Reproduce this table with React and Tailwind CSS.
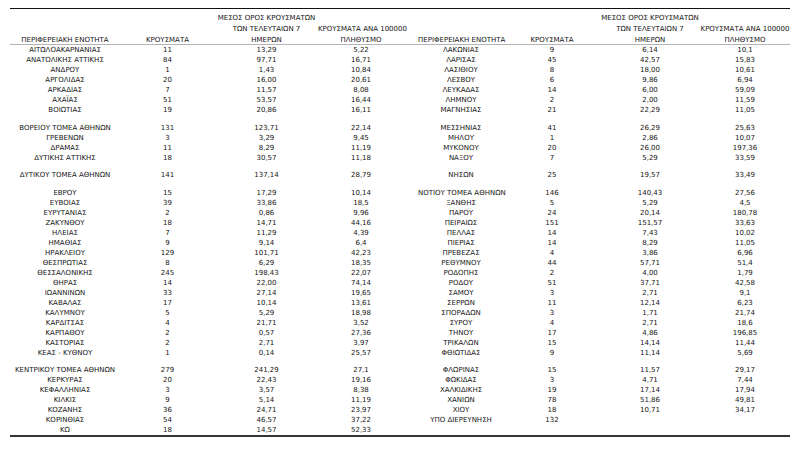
import React from 'react';

// one entry per line: left region, right region; number = spacer height
const rows = [
  [['ΑΙΤΩΛΟΑΚΑΡΝΑΝΙΑΣ', '11', '13,29', '5,22'], ['ΛΑΚΩΝΙΑΣ', '9', '6,14', '10,1']],
  [['ΑΝΑΤΟΛΙΚΗΣ ΑΤΤΙΚΗΣ', '84', '97,71', '16,71'], ['ΛΑΡΙΣΑΣ', '45', '42,57', '15,83']],
  [['ΑΝΔΡΟΥ', '1', '1,43', '10,84'], ['ΛΑΣΙΘΙΟΥ', '8', '18,00', '10,61']],
  [['ΑΡΓΟΛΙΔΑΣ', '20', '16,00', '20,61'], ['ΛΕΣΒΟΥ', '6', '9,86', '6,94']],
  [['ΑΡΚΑΔΙΑΣ', '7', '11,57', '8,08'], ['ΛΕΥΚΑΔΑΣ', '14', '6,00', '59,09']],
  [['ΑΧΑΪΑΣ', '51', '53,57', '16,44'], ['ΛΗΜΝΟΥ', '2', '2,00', '11,59']],
  [['ΒΟΙΩΤΙΑΣ', '19', '20,86', '16,11'], ['ΜΑΓΝΗΣΙΑΣ', '21', '22,29', '11,05']],
  8,
  [['ΒΟΡΕΙΟΥ ΤΟΜΕΑ ΑΘΗΝΩΝ', '131', '123,71', '22,14'], ['ΜΕΣΣΗΝΙΑΣ', '41', '26,29', '25,63']],
  [['ΓΡΕΒΕΝΩΝ', '3', '3,29', '9,45'], ['ΜΗΛΟΥ', '1', '2,86', '10,07']],
  [['ΔΡΑΜΑΣ', '11', '8,29', '11,19'], ['ΜΥΚΟΝΟΥ', '20', '26,00', '197,36']],
  [['ΔΥΤΙΚΗΣ ΑΤΤΙΚΗΣ', '18', '30,57', '11,18'], ['ΝΑΞΟΥ', '7', '5,29', '33,59']],
  7,
  [['ΔΥΤΙΚΟΥ ΤΟΜΕΑ ΑΘΗΝΩΝ', '141', '137,14', '28,79'], ['ΝΗΣΩΝ', '25', '19,57', '33,49']],
  8,
  [['ΕΒΡΟΥ', '15', '17,29', '10,14'], ['ΝΟΤΙΟΥ ΤΟΜΕΑ ΑΘΗΝΩΝ', '146', '140,43', '27,56']],
  [['ΕΥΒΟΙΑΣ', '39', '33,86', '18,5'], ['ΞΑΝΘΗΣ', '5', '5,29', '4,5']],
  [['ΕΥΡΥΤΑΝΙΑΣ', '2', '0,86', '9,96'], ['ΠΑΡΟΥ', '24', '20,14', '180,78']],
  [['ΖΑΚΥΝΘΟΥ', '18', '14,71', '44,16'], ['ΠΕΙΡΑΙΩΣ', '151', '151,57', '33,63']],
  [['ΗΛΕΙΑΣ', '7', '11,29', '4,39'], ['ΠΕΛΛΑΣ', '14', '7,43', '10,02']],
  [['ΗΜΑΘΙΑΣ', '9', '9,14', '6,4'], ['ΠΙΕΡΙΑΣ', '14', '8,29', '11,05']],
  [['ΗΡΑΚΛΕΙΟΥ', '129', '101,71', '42,23'], ['ΠΡΕΒΕΖΑΣ', '4', '3,86', '6,96']],
  [['ΘΕΣΠΡΩΤΙΑΣ', '8', '6,29', '18,35'], ['ΡΕΘΥΜΝΟΥ', '44', '57,71', '51,4']],
  [['ΘΕΣΣΑΛΟΝΙΚΗΣ', '245', '198,43', '22,07'], ['ΡΟΔΟΠΗΣ', '2', '4,00', '1,79']],
  [['ΘΗΡΑΣ', '14', '22,00', '74,14'], ['ΡΟΔΟΥ', '51', '37,71', '42,58']],
  [['ΙΩΑΝΝΙΝΩΝ', '33', '27,14', '19,65'], ['ΣΑΜΟΥ', '3', '2,71', '9,1']],
  [['ΚΑΒΑΛΑΣ', '17', '10,14', '13,61'], ['ΣΕΡΡΩΝ', '11', '12,14', '6,23']],
  [['ΚΑΛΥΜΝΟΥ', '5', '5,29', '18,98'], ['ΣΠΟΡΑΔΩΝ', '3', '1,71', '21,74']],
  [['ΚΑΡΔΙΤΣΑΣ', '4', '21,71', '3,52'], ['ΣΥΡΟΥ', '4', '2,71', '18,6']],
  [['ΚΑΡΠΑΘΟΥ', '2', '0,57', '27,36'], ['ΤΗΝΟΥ', '17', '4,86', '196,85']],
  [['ΚΑΣΤΟΡΙΑΣ', '2', '2,71', '3,97'], ['ΤΡΙΚΑΛΩΝ', '15', '14,14', '11,44']],
  [['ΚΕΑΣ - ΚΥΘΝΟΥ', '1', '0,14', '25,57'], ['ΦΘΙΩΤΙΔΑΣ', '9', '11,14', '5,69']],
  7,
  [['ΚΕΝΤΡΙΚΟΥ ΤΟΜΕΑ ΑΘΗΝΩΝ', '279', '241,29', '27,1'], ['ΦΛΩΡΙΝΑΣ', '15', '11,57', '29,17']],
  [['ΚΕΡΚΥΡΑΣ', '20', '22,43', '19,16'], ['ΦΩΚΙΔΑΣ', '3', '4,71', '7,44']],
  [['ΚΕΦΑΛΛΗΝΙΑΣ', '3', '3,57', '8,38'], ['ΧΑΛΚΙΔΙΚΗΣ', '19', '17,14', '17,94']],
  [['ΚΙΛΚΙΣ', '9', '5,14', '11,19'], ['ΧΑΝΙΩΝ', '78', '51,86', '49,81']],
  [['ΚΟΖΑΝΗΣ', '36', '24,71', '23,97'], ['ΧΙΟΥ', '18', '10,71', '34,17']],
  [['ΚΟΡΙΝΘΙΑΣ', '54', '46,57', '37,22'], ['ΥΠΟ ΔΙΕΡΕΥΝΗΣΗ', '132', '', '']],
  [['ΚΩ', '18', '14,57', '52,33'], ['', '', '', '']],
];

const th = 'p-0 font-normal text-center align-bottom whitespace-nowrap leading-[11px] border-b border-[#b5b5b5]';
const td = 'p-0 h-[10px] text-center whitespace-nowrap leading-[10px]';

function HeaderCells() {
  return (
    <>
      <th className={th}>
        <div className="relative top-[2px]">ΠΕΡΙΦΕΡΕΙΑΚΗ ΕΝΟΤΗΤΑ</div>
      </th>
      <th className={th}>
        <div className="relative top-[2px]">ΚΡΟΥΣΜΑΤΑ</div>
      </th>
      <th className={th}>
        <div className="relative top-[2px]">
          ΜΕΣΟΣ ΟΡΟΣ ΚΡΟΥΣΜΑΤΩΝ
          <br />
          ΤΩΝ ΤΕΛΕΥΤΑΙΩΝ 7
          <br />
          ΗΜΕΡΩΝ
        </div>
      </th>
      <th className={th}>
        <div className="relative top-[2px]">
          ΚΡΟΥΣΜΑΤΑ ΑΝΑ 100000
          <br />
          ΠΛΗΘΥΣΜΟ
        </div>
      </th>
    </>
  );
}

export default function App() {
  return (
    <div className="w-[804px] h-[458px] bg-white pt-[8px] pl-[10px] font-['DejaVu_Sans',sans-serif] text-[7px] text-[#141414]">
      <table className="table-fixed border-collapse w-[780px] border-t border-b-2 border-t-[#111] border-b-[#333]">
        <colgroup>
          <col className="w-[110px]" />
          <col className="w-[95px]" />
          <col className="w-[103px]" />
          <col className="w-[86px]" />
          <col className="w-[14px]" />
          <col className="w-[86px]" />
          <col className="w-[96px]" />
          <col className="w-[100px]" />
          <col className="w-[90px]" />
        </colgroup>
        <thead>
          <tr className="h-[36px]">
            <HeaderCells />
            <th className="p-0 border-b border-[#b5b5b5]" />
            <HeaderCells />
          </tr>
        </thead>
        <tbody>
          {rows.map((r, i) =>
            typeof r === 'number' ? (
              <tr key={i} className={r === 8 ? 'h-[8px]' : 'h-[7px]'}>
                <td colSpan={9} className="p-0" />
              </tr>
            ) : (
              <tr key={i}>
                {r[0].map((v, j) => (
                  <td key={'l' + j} className={td}>{v}</td>
                ))}
                <td className="p-0" />
                {r[1].map((v, j) => (
                  <td key={'r' + j} className={td}>{v}</td>
                ))}
              </tr>
            )
          )}
        </tbody>
      </table>
    </div>
  );
}
